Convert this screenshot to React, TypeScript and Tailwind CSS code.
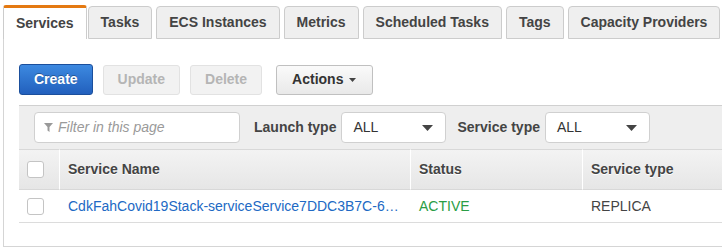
import React from "react";

const tabs = ["Tasks", "ECS Instances", "Metrics", "Scheduled Tasks", "Tags", "Capacity Providers"];

const Caret: React.FC<{ small?: boolean }> = ({ small }) => (
  <svg width={small ? 7 : 11} height={small ? 4 : 6} viewBox="0 0 11 6" className="fill-[#444]">
    <path d="M0 0 H11 L5.5 6 Z" />
  </svg>
);

const Checkbox: React.FC = () => (
  <div className="w-[17px] h-[17px] rounded-[3px] border border-[#c4c4c4] bg-white"></div>
);

const Select: React.FC<{ label: string }> = ({ label }) => (
  <div className="flex items-center gap-[5px] shrink-0">
    <span className="font-bold text-[#444] whitespace-nowrap">{label}</span>
    <div className="w-[105px] h-[31px] bg-white border border-[#d0d0d0] rounded-[4px] flex items-center justify-between pl-[11px] pr-[12px] text-[#333]">
      <span>ALL</span>
      <Caret />
    </div>
  </div>
);

export default function App() {
  return (
    <div className="w-[722px] h-[249px] overflow-hidden bg-white text-[14px] text-[#444] font-['Liberation_Sans',Arial,sans-serif]">
      {/* tab strip */}
      <div className="flex items-end pl-[3px] pt-[5px] w-[722px]">
        <div className="shrink-0 whitespace-nowrap h-[34px] px-[12px] flex items-center bg-white border-x border-[#cccccc] border-t-[3px] border-t-[#e47911] rounded-t-[3px] font-bold text-[#444] mr-[1px]">
          Services
        </div>
        {tabs.map((t) => (
          <div
            key={t}
            className="shrink-0 whitespace-nowrap h-[33px] px-[12px] mr-[4px] flex items-center bg-[#efefef] border border-[#cccccc] rounded-t-[4px] font-bold text-[#444]"
          >
            {t}
          </div>
        ))}
        <div className="flex-1 min-w-[10px] border-b border-[#cccccc]"></div>
      </div>

      {/* panel */}
      <div className="ml-[3px] h-[208px] border-l border-b border-[#d5d5d5] pl-[15px] pt-[25px]">
        <div className="flex items-center h-[31px]">
          <button className="h-[31px] px-[14px] rounded-[3px] border border-[#1b4f9c] bg-gradient-to-b from-[#3d89e0] to-[#2260bd] text-white font-bold [text-shadow:0_-1px_0_rgba(0,0,0,0.3)]">
            Create
          </button>
          <button className="ml-[10px] h-[30px] px-[14px] rounded-[3px] border border-[#e2e2e2] bg-[#f2f2f2] text-[#b5b5b5] font-bold">
            Update
          </button>
          <button className="ml-[10px] h-[30px] px-[14px] rounded-[3px] border border-[#e2e2e2] bg-[#f2f2f2] text-[#b5b5b5] font-bold">
            Delete
          </button>
          <button className="ml-[14px] h-[30px] pl-[15px] pr-[16px] rounded-[3px] border border-[#c0c0c0] bg-gradient-to-b from-[#fafafa] to-[#e9e9e9] text-[#333] font-bold flex items-center gap-[6px]">
            Actions
            <Caret small />
          </button>
        </div>

        {/* filter bar */}
        <div className="mt-[10px] h-[44px] bg-[#eeeeee] border-t border-[#d0d0d0] flex items-center pl-[15px] gap-[14px]">
          <div className="shrink-0 w-[206px] h-[31px] bg-white border border-[#d0d0d0] rounded-[4px] flex items-center pl-[9px] gap-[5px]">
            <svg width="9" height="9" viewBox="0 0 9 9" className="fill-[#999]">
              <path d="M0 0 H9 L5.5 4 V9 L3.5 7.5 V4 Z" />
            </svg>
            <span className="italic text-[#9a9a9a]">Filter in this page</span>
          </div>
          <Select label="Launch type" />
          <div className="-ml-[3px]">
            <Select label="Service type" />
          </div>
        </div>

        {/* table */}
        <div className="grid grid-cols-[40px_351px_172px_237px] w-[800px]">
          <div className="h-[41px] border-y border-[#d8d8d8] bg-gradient-to-b from-[#f3f3f3] to-[#e6e6e6] flex items-center pl-[8px]">
            <Checkbox />
          </div>
          <div className="h-[41px] border-y border-[#d8d8d8] border-l border-l-white bg-gradient-to-b from-[#f3f3f3] to-[#e6e6e6] flex items-center pl-[8px] font-bold text-[#444] [text-shadow:0_1px_0_#fff]">
            Service Name
          </div>
          <div className="h-[41px] border-y border-[#d8d8d8] border-l border-l-white bg-gradient-to-b from-[#f3f3f3] to-[#e6e6e6] flex items-center pl-[8px] font-bold text-[#444] [text-shadow:0_1px_0_#fff]">
            Status
          </div>
          <div className="h-[41px] border-y border-[#d8d8d8] border-l border-l-white bg-gradient-to-b from-[#f3f3f3] to-[#e6e6e6] flex items-center pl-[8px] font-bold text-[#444] [text-shadow:0_1px_0_#fff]">
            Service type
          </div>

          <div className="h-[33px] border-b border-[#dcdcdc] flex items-center pl-[8px]">
            <Checkbox />
          </div>
          <div className="h-[33px] border-b border-[#dcdcdc] flex items-center pl-[9px] whitespace-nowrap">
            <span className="text-[#2169c4]">CdkFahCovid19Stack-serviceService7DDC3B7C-6…</span>
          </div>
          <div className="h-[33px] border-b border-[#dcdcdc] flex items-center pl-[9px] text-[#2a9d45]">
            ACTIVE
          </div>
          <div className="h-[33px] border-b border-[#dcdcdc] flex items-center pl-[9px] text-[#444]">
            REPLICA
          </div>
        </div>
      </div>
    </div>
  );
}
